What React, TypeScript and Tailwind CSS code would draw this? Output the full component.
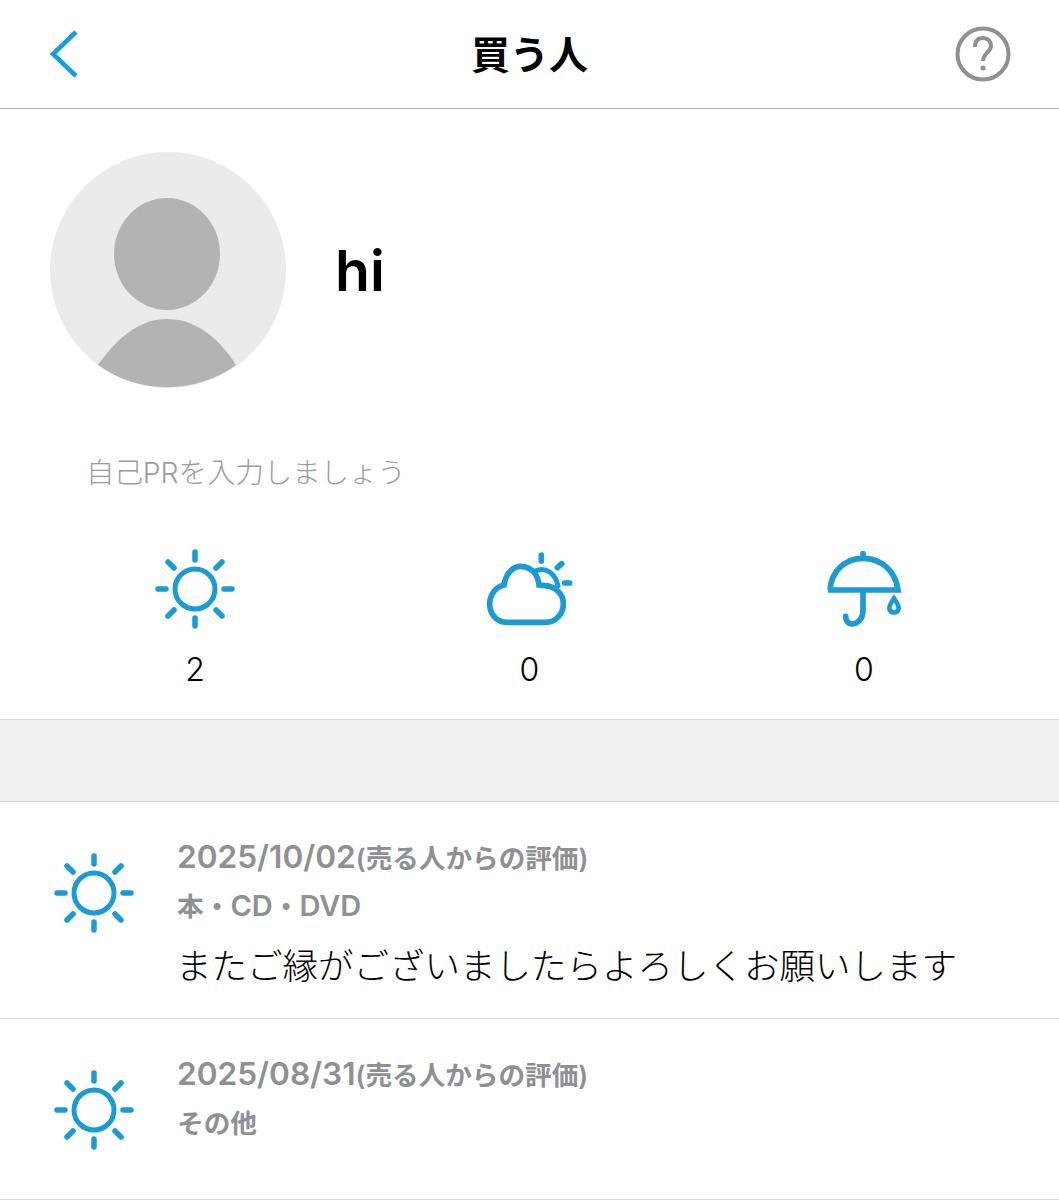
const FONT = 'font-["Inter","Noto_Sans_CJK_JP",sans-serif]';

function SunIcon() {
    const rays = [
        [40, 3, 40, 11],
        [40, 69, 40, 77],
        [3, 40, 11, 40],
        [69, 40, 77, 40],
        [13, 13, 19, 19],
        [67, 13, 61, 19],
        [13, 67, 19, 61],
        [67, 67, 61, 61],
    ];
    return (
        <svg viewBox="0 0 80 80" className="h-20 w-20 shrink-0" fill="none" stroke="#1a9ad6">
            <circle cx="40" cy="40" r="20" strokeWidth="5" />
            {rays.map(([x1, y1, x2, y2], i) => (
                <line key={i} x1={x1} y1={y1} x2={x2} y2={y2} strokeWidth="5.5" strokeLinecap="round" />
            ))}
        </svg>
    );
}

function CloudIcon() {
    return (
        <svg viewBox="40 60 270 240" className="h-20 w-[90px]" fill="none" stroke="#1a9ad6" strokeWidth="17" strokeLinecap="round">
            <path d="M110 280H225C255 280 278 255 278 225C278 195 255 172 222 170L205 168C205 160 203 152 197 140C187 122 170 112 150 112C125 112 105 135 100 168C78 172 57 195 57 225C57 252 75 280 110 280Z" />
            <path d="M192 127C225 110 255 135 262 170" strokeWidth="15" />
            <path d="M212 78V96M260 116L273 104M282 162H297" />
        </svg>
    );
}

function UmbrellaIcon() {
    return (
        <svg viewBox="40 60 240 240" className="h-20 w-20" fill="none" stroke="#1a9ad6" strokeWidth="17">
            <path d="M58 183C62 125 105 88 157 88C210 88 255 125 262 183H52" />
            <path d="M157 74V88" strokeLinecap="round" />
            <path d="M157 185V245C157 270 140 285 125 285C112 285 105 275 105 262" strokeLinecap="round" />
            <path d="M250 208C240 222 236 228 236 238C236 246 242 250 250 250C258 250 264 246 264 238C264 228 260 222 250 208Z" strokeWidth="14" />
        </svg>
    );
}

function Avatar() {
    return (
        <svg viewBox="0 0 236 236" className="h-[236px] w-[236px] shrink-0">
            <circle cx="118" cy="118" r="118" fill="#ebebeb" />
            <ellipse cx="117" cy="102" rx="53" ry="56" fill="#b3b3b3" />
            <path d="M48 213C70 182 92 167 117 167C143 167 166 182 186 213A118 118 0 0 1 48 213Z" fill="#b3b3b3" />
        </svg>
    );
}

function Stat({ icon, count }: { icon: React.ReactNode; count: number }) {
    return (
        <div className="flex flex-col items-center">
            {icon}
            <div className="mt-[22px] text-[32px] leading-[38px] font-light text-black">{count}</div>
        </div>
    );
}

function Review({ date, category, comment }: { date: string; category: React.ReactNode; comment?: string }) {
    return (
        <div className="flex border-b border-[#d6d6d6] pl-[54px]">
            <div className="pt-[51px]">
                <SunIcon />
            </div>
            <div className="ml-[43px] flex min-h-[180px] flex-col pt-[36px]">
                <div className="h-[38px] text-[26.6px] leading-[38px] font-semibold text-[#8e9094]">
                    <span className="text-[31.6px] leading-[38px]">{date}</span>(売る人からの評価)
                </div>
                <div className="mt-[11px] h-[38px] text-[26.7px] leading-[38px] font-semibold text-[#8e9094]">{category}</div>
                {comment && (
                    <div className="mt-[20px] mb-[29px] -ml-px text-[35.5px] leading-[44px] font-light whitespace-nowrap text-black">{comment}</div>
                )}
            </div>
        </div>
    );
}

export default function App() {
    return (
        <div className={`h-[1200px] w-[1059px] overflow-hidden bg-white ${FONT}`}>
            <header className="flex h-[109px] items-center justify-between border-b border-[#b0b0b0] pr-[48px] pl-[50px]">
                <div className="w-[54px]">
                    <svg viewBox="0 0 30 50" className="h-[50px] w-[30px]" fill="none" stroke="#0ea0e3" strokeWidth="4.5">
                        <path d="M26 3L3 25L26 47" />
                    </svg>
                </div>
                <h1 className="text-[39px] leading-none font-bold text-black">買う人</h1>
                <svg viewBox="0 0 56 56" className="h-14 w-14" fill="none" stroke="#8e9094">
                    <circle cx="28" cy="28" r="25.5" strokeWidth="4" />
                    <path d="M20 21C20 15 23 12 28 12C33 12 36 15 36 20C36 26 28 27 28 35" strokeWidth="4" />
                    <circle cx="28" cy="42" r="2.6" fill="#8e9094" stroke="none" />
                </svg>
            </header>

            <section className="flex items-center gap-[49px] pt-[43px] pl-[50px]">
                <Avatar />
                <div className="text-[57px] leading-none font-semibold text-black">hi</div>
            </section>

            <p className="mt-[67px] pl-[86px] text-[28.4px] leading-[36px] font-light text-[#9a9c9f]">自己PRを入力しましょう</p>

            <section className="mt-[58px] grid grid-cols-3 border-b border-[#d6d6d6] px-[28px] pb-[30px]">
                <Stat icon={<SunIcon />} count={2} />
                <Stat icon={<CloudIcon />} count={0} />
                <Stat icon={<UmbrellaIcon />} count={0} />
            </section>

            <div className="h-[82px] border-b border-[#d6d6d6] bg-[#f0f0f0]" />

            <Review
                date="2025/10/02"
                category={
                    <>
                        本・<span className="text-[29px]">CD</span>・<span className="text-[29px]">DVD</span>
                    </>
                }
                comment="またご縁がございましたらよろしくお願いします"
            />
            <Review date="2025/08/31" category="その他" />
        </div>
    );
}
